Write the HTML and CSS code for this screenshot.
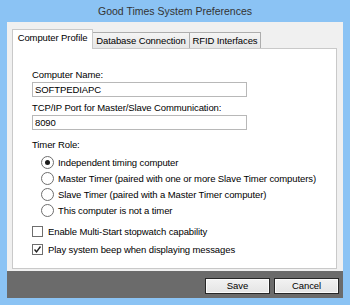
FILE: index.html
```html
<!DOCTYPE html>
<html lang="en">
<head>
    <meta charset="UTF-8">
    <title>Good Times System Preferences</title>
    <link rel="stylesheet" href="styles.css">
</head>
<body>
    <div class="window">
        <div class="titlebar">Good Times System Preferences</div>
        <div class="client">
            <div class="tabs">
                <div class="tab active">Computer Profile</div>
                <div class="tab tab-db">Database Connection</div>
                <div class="tab tab-rfid">RFID Interfaces</div>
            </div>
            <div class="panel">
                <div class="label">Computer Name:</div>
                <div class="textbox">SOFTPEDIAPC</div>
                <div class="label label-port">TCP/IP Port for Master/Slave Communication:</div>
                <div class="textbox">8090</div>
                <div class="label label-role">Timer Role:</div>
                <div class="roles">
                    <div class="radio-row"><span class="radio checked"></span>Independent timing computer</div>
                    <div class="radio-row"><span class="radio"></span>Master Timer (paired with one or more Slave Timer computers)</div>
                    <div class="radio-row"><span class="radio"></span>Slave Timer (paired with a Master Timer computer)</div>
                    <div class="radio-row"><span class="radio"></span>This computer is not a timer</div>
                </div>
                <div class="checks">
                    <div class="check-row"><span class="checkbox"></span>Enable Multi-Start stopwatch capability</div>
                    <div class="check-row">
                        <span class="checkbox">
                            <svg width="9" height="9" viewBox="0 0 9 9"><path d="M1.5 4.5 L3.5 6.8 L7.5 1.5" fill="none" stroke="#222" stroke-width="1.4"/></svg>
                        </span>Play system beep when displaying messages
                    </div>
                </div>
            </div>
            <div class="footer">
                <div class="button">Save</div>
                <div class="button">Cancel</div>
            </div>
        </div>
    </div>
</body>
</html>
```

FILE: styles.css
```css
body {
    margin: 0;
    font-family: 'Liberation Sans', Arial, sans-serif;
    font-size: 9.5px;
    letter-spacing: -0.1px;
    color: #000000;
}
.window {
    width: 350px;
    height: 305px;
    background-color: #8bc3f4;
    display: flex;
    flex-direction: column;
}
.titlebar {
    height: 22px;
    line-height: 22px;
    text-align: center;
    font-size: 10.5px;
    letter-spacing: 0;
    color: #333333;
}
.client {
    margin: 0 7px 7px 7px;
    flex: 1;
    background-color: #f0f0f0;
    display: flex;
    flex-direction: column;
}
.tabs {
    display: flex;
    align-items: flex-end;
    margin: 7px 0 0 5px;
    position: relative;
    z-index: 1;
}
.tab {
    height: 15px;
    line-height: 16px;
    text-align: center;
    border: 1px solid #adadad;
    border-bottom: none;
    background: linear-gradient(#f4f4f4, #e6e6e6);
    margin-left: -1px;
}
.tab.active {
    height: 19px;
    line-height: 15px;
    width: 79px;
    margin-left: 0;
    background: #ffffff;
    border-color: #c9c9c9;
    margin-bottom: -1px;
    z-index: 2;
}
.tab-db {
    width: 96px;
}
.tab-rfid {
    width: 70px;
}
.panel {
    margin-left: 5px;
    width: 325px;
    height: 221px;
    box-sizing: border-box;
    background: #ffffff;
    border: 1px solid #c9c9c9;
    padding: 19px 0 0 19px;
}
.label {
    line-height: 13px;
}
.label-port {
    margin-top: 4px;
}
.label-role {
    margin-top: 8px;
}
.textbox {
    width: 215px;
    height: 15px;
    box-sizing: border-box;
    border: 1px solid #b8b8b8;
    line-height: 13px;
    padding-left: 2px;
    margin-top: 1px;
}
.roles {
    margin-top: 3px;
    padding-left: 9px;
}
.radio-row {
    height: 16px;
    display: flex;
    align-items: center;
}
.radio {
    width: 11px;
    height: 11px;
    border: 1px solid #6e6e6e;
    border-radius: 50%;
    margin-right: 4px;
    display: flex;
    align-items: center;
    justify-content: center;
    background: #ffffff;
}
.radio.checked::after {
    content: "";
    width: 5px;
    height: 5px;
    border-radius: 50%;
    background: #1a1a1a;
}
.checks {
    margin-top: 4px;
}
.check-row {
    height: 18px;
    display: flex;
    align-items: center;
}
.checkbox {
    width: 9px;
    height: 9px;
    border: 1px solid #6e6e6e;
    margin-right: 5px;
    display: flex;
    align-items: center;
    justify-content: center;
    background: #ffffff;
}
.footer {
    margin-top: 2px;
    flex: 1;
    background-color: #6b6b6b;
    display: flex;
    justify-content: flex-end;
    align-items: flex-start;
    gap: 4px;
    padding: 7px 4px 0 0;
}
.button {
    width: 65px;
    height: 16px;
    box-sizing: border-box;
    border: 1px solid #262626;
    box-shadow: inset 0 0 0 1px #fbfbfb;
    background: linear-gradient(#f2f2f2, #e4e4e4);
    text-align: center;
    line-height: 14px;
}
```
